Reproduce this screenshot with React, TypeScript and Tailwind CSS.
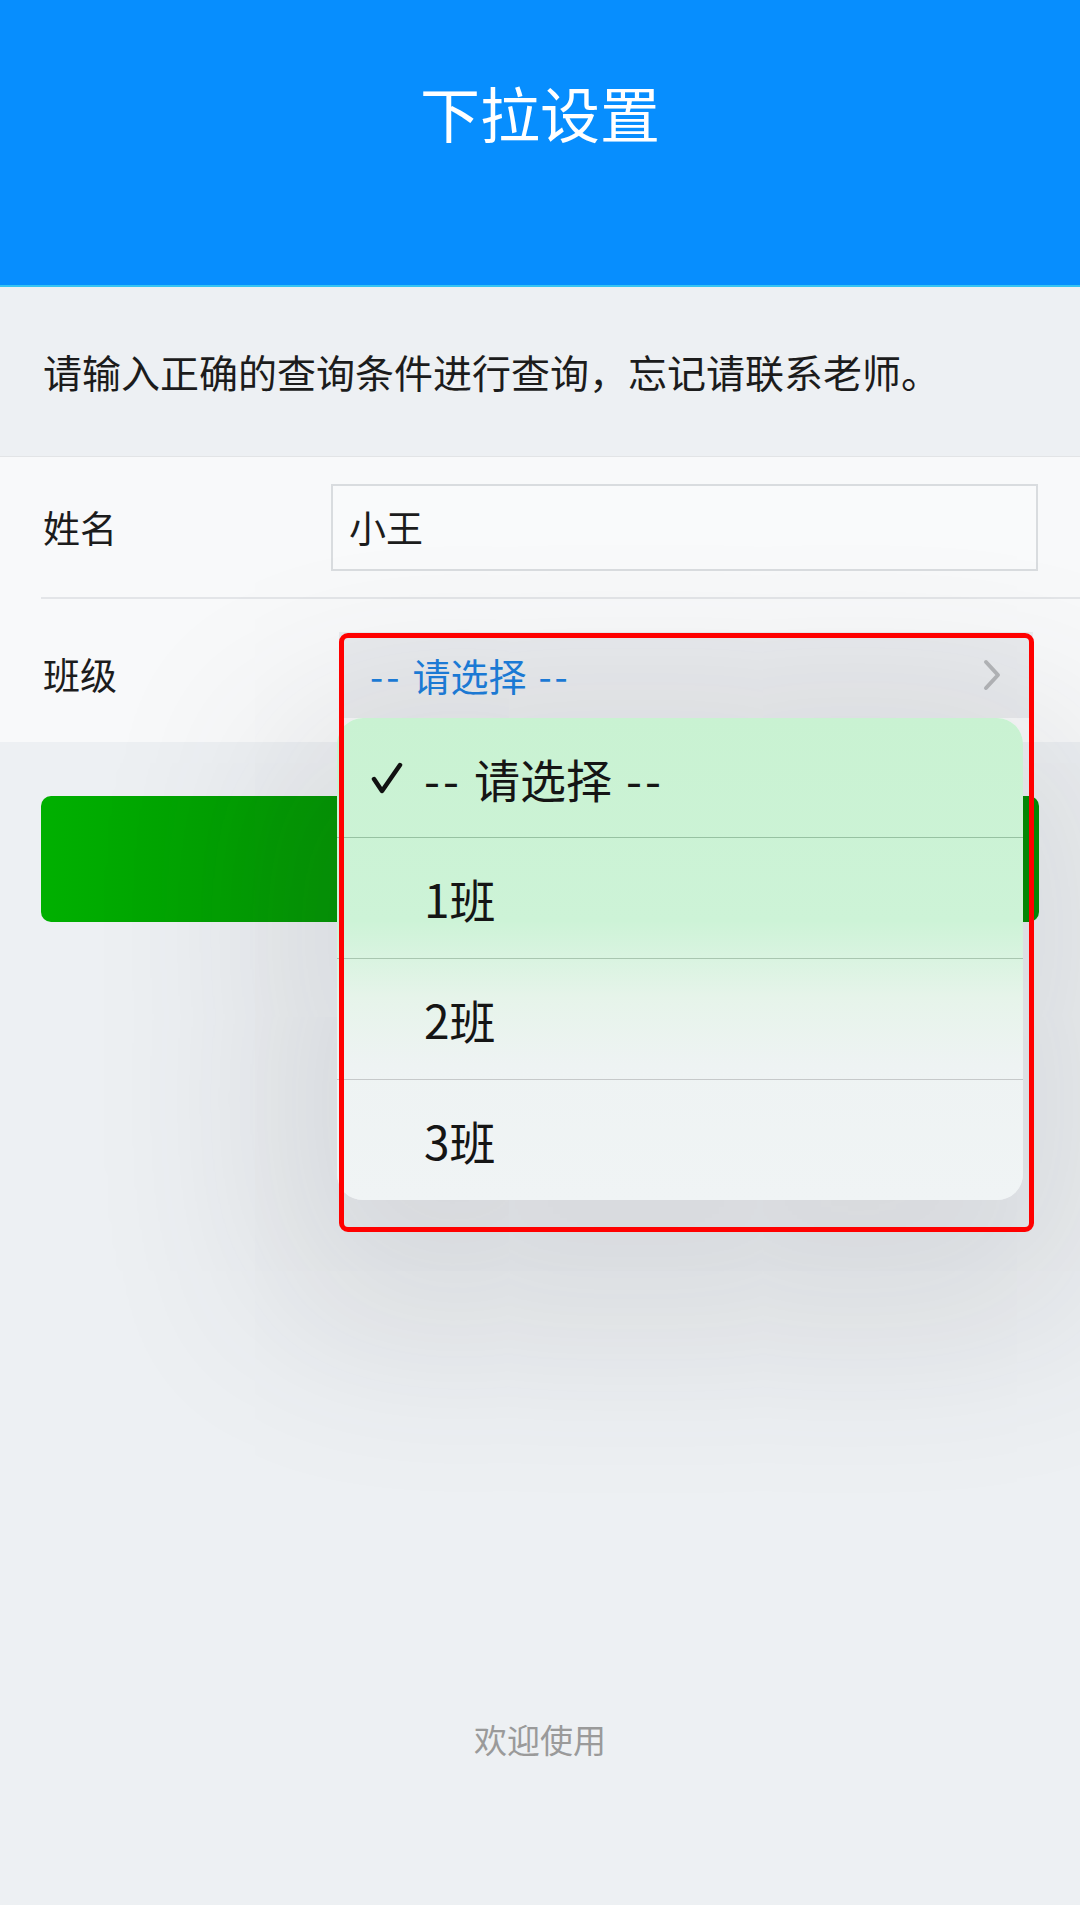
import React from 'react';

const options = ['请选择', '1班', '2班', '3班'];

// "-- 请选择 --" with the wider dashes of the iOS font
const Placeholder: React.FC<{ before: string; after: string }> = ({ before, after }) => (
  <span className="inline-flex items-center">
    <span className={before}>--</span>
    请选择
    <span className={after}>--</span>
  </span>
);

const App: React.FC = () => {
  return (
    <div className="relative min-h-[1905px] bg-[#edf0f3] font-['Noto_Sans_CJK_SC','Noto_Sans',sans-serif] text-[#1c1c1c]">
      {/* header */}
      <div className="h-[287px] bg-[#078efe] border-b-2 border-[#35c4f2] flex justify-center pt-[82px]">
        <h1 className="text-[60px] leading-none text-white font-normal">下拉设置</h1>
      </div>

      <div className="h-[169px] flex items-center px-[43px]">
        <p className="text-[39px] leading-none">请输入正确的查询条件进行查询，忘记请联系老师。</p>
      </div>

      {/* form */}
      <div className="bg-[#f8f9fa] pl-[41px] border-t border-[#e2e4e6]">
        <div className="h-[142px] flex items-center border-b-2 border-[#e3e5e8] pr-[42px]">
          <span className="w-[290px] pl-[2px] text-[37px] leading-none">姓名</span>
          <div className="flex-1 h-[87px] border-2 border-[#d9dcdf] bg-[#f9fafb] flex items-center px-[16px] text-[37px] leading-none">
            小王
          </div>
        </div>
        <div className="h-[143px] flex items-start pr-[47px]">
          <span className="w-[298px] pl-[2px] text-[37px] leading-none mt-[57px]">班级</span>
          <div className="flex-1 h-[86px] mt-[33px] bg-[#e9ebee] flex items-center justify-between pl-[31px] pr-[30px]">
            <span className="text-[38px] leading-none text-[#1b7ddb]">
              <Placeholder before="tracking-[3px] mr-[10px]" after="tracking-[3px] ml-[12px]" />
            </span>
            <svg width="22" height="32" viewBox="0 0 22 32" fill="none">
              <path d="M5 3 L17 16 L5 29" stroke="#b3b5b8" strokeWidth="4" strokeLinecap="round" strokeLinejoin="round" />
            </svg>
          </div>
        </div>
      </div>

      {/* submit button, mostly hidden by the popover */}
      <div className="px-[41px] mt-[54px]">
        <button className="w-full h-[126px] rounded-[10px] bg-[linear-gradient(90deg,#00b000_0%,#008d00_40%,#008d00_100%)] text-white text-[40px]">
          查询
        </button>
      </div>

      <p className="mt-[797px] text-center text-[33px] leading-[40px] text-[#9a9a9a]">欢迎使用</p>

      {/* select popover */}
      <div className="absolute left-[337px] top-[718px] w-[686px] h-[482px] rounded-[26px] overflow-hidden shadow-[0_60px_180px_70px_rgba(60,64,72,0.13)] bg-[linear-gradient(180deg,#c9f2d2_0%,#cdf3d7_42%,#e6f4ea_58%,#eef3f3_72%,#f0f4f5_100%)]">
        {options.map((o, i) => (
          <div
            key={o}
            className={
              i === 0
                ? 'h-[120px] flex items-center border-b border-[#97c2a2]'
                : i === 1
                ? 'h-[121px] flex items-center border-b border-[#a9c6b0]'
                : i === 2
                ? 'h-[121px] flex items-center border-b border-[#c6c9ca]'
                : 'h-[120px] flex items-center'
            }
          >
            <div className="w-[87px] flex justify-end pr-[21px]">
              {i === 0 && (
                <svg width="32" height="32" viewBox="0 0 32 32" fill="none">
                  <path d="M3 17 L11 29 L29 3" stroke="#111" strokeWidth="4.5" strokeLinecap="round" strokeLinejoin="round" />
                </svg>
              )}
            </div>
            <span className="text-[46px] leading-none text-[#151515]">
              {i === 0 ? <Placeholder before="tracking-[3px] mr-[12px]" after="tracking-[3px] ml-[14px]" /> : o}
            </span>
          </div>
        ))}
      </div>

      {/* red annotation frame */}
      <div className="absolute left-[339px] top-[633px] w-[695px] h-[599px] border-[5px] border-[#ff0000] rounded-[9px] pointer-events-none" />
    </div>
  );
};

export default App;
